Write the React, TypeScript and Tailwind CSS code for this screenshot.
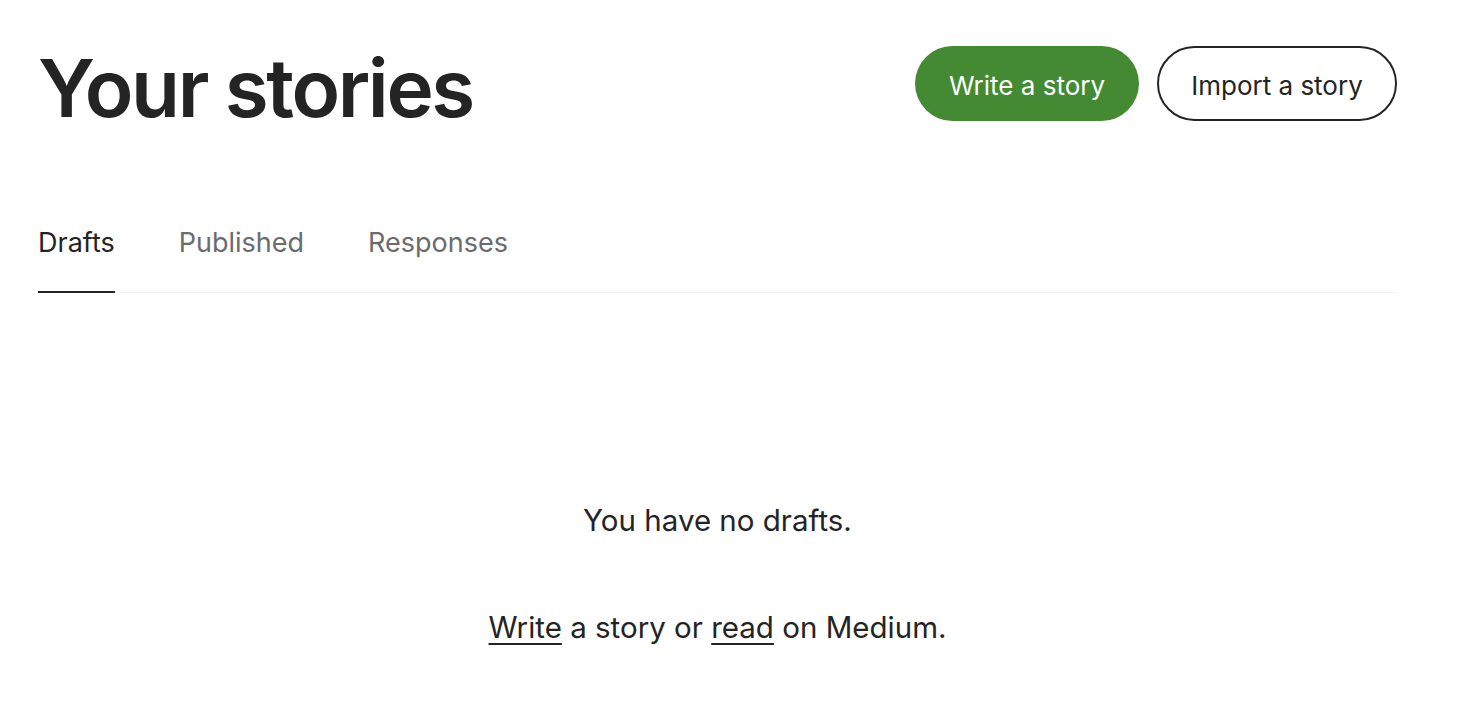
export default function App() {
  const tabs = ["Drafts", "Published", "Responses"];

  return (
    <div className="min-h-screen bg-white text-[#242424] font-['Inter',sans-serif]">
      <div className="ml-[38px] w-[1359px]">
        {/* Header */}
        <div className="flex items-start justify-between pt-[46px]">
          <h1 className="pt-[4px] text-[80px] font-semibold leading-[75px] tracking-[-0.03em]">
            Your stories
          </h1>
          <div className="flex gap-[18px]">
            <button className="h-[75px] w-[224px] rounded-full bg-[#448a33] pt-[3px] text-[26px] text-white">
              Write a story
            </button>
            <button className="h-[75px] w-[240px] rounded-full border-2 border-[#242424] pt-[3px] text-[26px]">
              Import a story
            </button>
          </div>
        </div>

        {/* Tabs */}
        <div className="mt-[98px] flex gap-[64px] border-b border-[#f2f2f2]">
          {tabs.map((tab, i) => (
            <div
              key={tab}
              className={
                i === 0
                  ? "-mb-px border-b-2 border-[#242424] pb-[28px] text-[27px] leading-[40px]"
                  : "pb-[28px] text-[27px] leading-[40px] text-[#6b6b6b]"
              }
            >
              {tab}
            </div>
          ))}
        </div>

        {/* Empty state */}
        <div className="pt-[207px] text-center text-[29.5px]">
          <p className="leading-[40px]">You have no drafts.</p>
          <p className="mt-[67px] leading-[40px]">
            <a className="underline decoration-2 underline-offset-[5px]">Write</a> a story or{" "}
            <a className="underline decoration-2 underline-offset-[5px]">read</a> on Medium.
          </p>
        </div>
      </div>
    </div>
  );
}
